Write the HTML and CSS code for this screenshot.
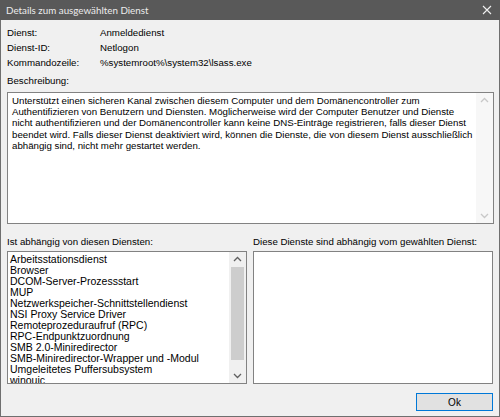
FILE: index.html
```html
<!DOCTYPE html>
<html lang="de">
<head>
<meta charset="utf-8">
<title>Details zum ausgewählten Dienst</title>
<link rel="stylesheet" href="styles.css">
</head>
<body>
<div class="window">
  <div class="titlebar">
    <span class="title">Details zum ausgewählten Dienst</span>
    <svg class="close" width="10" height="10" viewBox="0 0 10 10"><path d="M1 1L9 9M9 1L1 9" stroke="#f0f0f0" stroke-width="1.1" fill="none"/></svg>
  </div>
  <div class="content">
    <div class="info">
      <span>Dienst:</span><span>Anmeldedienst</span>
      <span>Dienst-ID:</span><span>Netlogon</span>
      <span>Kommandozeile:</span><span>%systemroot%\system32\lsass.exe</span>
    </div>
    <div class="label desc-label">Beschreibung:</div>
    <div class="box desc">
      <div class="desc-text">Unterstützt einen sicheren Kanal zwischen diesem Computer und dem Domänencontroller zum<br>Authentifizieren von Benutzern und Diensten. Möglicherweise wird der Computer Benutzer und Dienste<br>nicht authentifizieren und der Domänencontroller kann keine DNS-Einträge registrieren, falls dieser Dienst<br>beendet wird. Falls dieser Dienst deaktiviert wird, können die Dienste, die von diesem Dienst ausschließlich<br>abhängig sind, nicht mehr gestartet werden.</div>
      <div class="scrollbar disabled">
        <svg class="arrow" width="17" height="15" viewBox="0 0 17 15"><path d="M5 9L8.5 5.5L12 9" stroke="#c8c8c8" stroke-width="1.3" fill="none"/></svg>
        <div class="track"></div>
        <svg class="arrow" width="17" height="15" viewBox="0 0 17 15"><path d="M5 6L8.5 9.5L12 6" stroke="#c8c8c8" stroke-width="1.3" fill="none"/></svg>
      </div>
    </div>
    <div class="lists">
      <div class="col">
        <div class="label">Ist abhängig von diesen Diensten:</div>
        <div class="box list">
          <ul class="items">
            <li>Arbeitsstationsdienst</li>
            <li>Browser</li>
            <li>DCOM-Server-Prozessstart</li>
            <li>MUP</li>
            <li>Netzwerkspeicher-Schnittstellendienst</li>
            <li>NSI Proxy Service Driver</li>
            <li>Remoteprozeduraufruf (RPC)</li>
            <li>RPC-Endpunktzuordnung</li>
            <li>SMB 2.0-Miniredirector</li>
            <li>SMB-Miniredirector-Wrapper und -Modul</li>
            <li>Umgeleitetes Puffersubsystem</li>
            <li>winouic</li>
          </ul>
          <div class="scrollbar">
            <svg class="arrow" width="17" height="15" viewBox="0 0 17 15"><path d="M5 9L8.5 5.5L12 9" stroke="#606060" stroke-width="1.3" fill="none"/></svg>
            <div class="track"><div class="thumb"></div></div>
            <svg class="arrow" width="17" height="15" viewBox="0 0 17 15"><path d="M5 6L8.5 9.5L12 6" stroke="#606060" stroke-width="1.3" fill="none"/></svg>
          </div>
        </div>
      </div>
      <div class="col">
        <div class="label">Diese Dienste sind abhängig vom gewählten Dienst:</div>
        <div class="box list"></div>
      </div>
    </div>
    <div class="footer">
      <button class="ok">Ok</button>
    </div>
  </div>
</div>
</body>
</html>
```
FILE: styles.css
```css
html, body {
  margin: 0;
  padding: 0;
  background: #f0f0f0;
}
body {
  width: 500px;
  height: 417px;
  overflow: hidden;
  font-family: "Liberation Sans", Arial, sans-serif;
  font-size: 9.7px;
  color: #000;
}
.window {
  box-sizing: border-box;
  width: 500px;
  height: 417px;
  border: 1px solid #6f6f6f;
  border-top: none;
  background: #f0f0f0;
  display: flex;
  flex-direction: column;
}
.titlebar {
  height: 20px;
  margin: 0 -1px;
  background: #595959;
  color: #ececec;
  display: flex;
  align-items: center;
  justify-content: space-between;
  padding: 0 8px 0 6px;
  font-family: Lato, sans-serif;
  font-size: 9.8px;
}
.title {
  line-height: 20px;
}
.close {
  display: block;
}
.content {
  flex: 1;
  display: flex;
  flex-direction: column;
  padding: 5px 5px 0 6px;
}
.info {
  display: grid;
  grid-template-columns: 93px 1fr;
  line-height: 15px;
}
.label {
  line-height: 15px;
  white-space: nowrap;
}
.desc-label {
  margin-top: 3px;
  margin-bottom: 4px;
}
.box {
  background: #fff;
  border: 1px solid #828282;
  box-sizing: border-box;
  display: flex;
}
.desc {
  height: 132px;
}
.desc-text {
  flex: 1;
  padding: 2px 4px;
  line-height: 11.2px;
  white-space: nowrap;
  overflow: hidden;
}
.scrollbar {
  width: 17px;
  flex: none;
  display: flex;
  flex-direction: column;
  background: #f0f0f0;
}
.scrollbar.disabled {
  background: #f7f7f7;
}
.arrow {
  display: block;
  flex: none;
}
.track {
  flex: 1;
  display: flex;
  flex-direction: column;
  padding: 0 2px;
}
.thumb {
  height: 93px;
  background: #cdcdcd;
}
.lists {
  display: grid;
  grid-template-columns: 240px 240px;
  column-gap: 6px;
  margin-top: 10px;
}
.col {
  display: flex;
  flex-direction: column;
}
.col .label {
  margin-bottom: 2px;
}
.list {
  height: 133px;
}
.items {
  flex: 1;
  list-style: none;
  margin: 0;
  padding: 2px 2px 0 2px;
  font-size: 10.5px;
  line-height: 11px;
  overflow: hidden;
  white-space: nowrap;
}
.footer {
  display: flex;
  justify-content: flex-end;
  padding-top: 9px;
  padding-right: 1px;
}
.ok {
  width: 77px;
  height: 18px;
  margin: 0;
  padding: 0;
  background: #e1e1e1;
  border: 1px solid #0078d7;
  font-family: "Liberation Sans", Arial, sans-serif;
  font-size: 10px;
  color: #000;
}
```
